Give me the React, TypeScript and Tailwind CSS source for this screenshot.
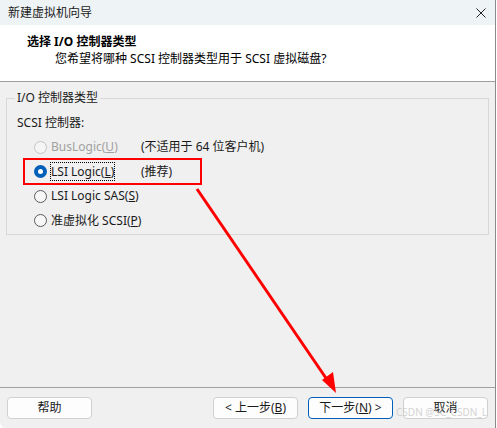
import React from 'react';

const FONT = { fontFamily: '"Noto Sans", "Noto Sans CJK SC", sans-serif' };

type Opt = { label: string; key: string; tail: string; note?: string; disabled?: boolean; checked?: boolean };

const OPTIONS: Opt[] = [
  { label: 'BusLogic(', key: 'U', tail: ')', note: '(不适用于 64 位客户机)', disabled: true },
  { label: 'LSI Logic(', key: 'L', tail: ')', note: '(推荐)', checked: true },
  { label: 'LSI Logic SAS(', key: 'S', tail: ')' },
  { label: '准虚拟化 SCSI(', key: 'P', tail: ')' },
];

function Radio({ checked, disabled }: { checked?: boolean; disabled?: boolean }) {
  if (checked) {
    return (
      <span className="flex h-[13px] w-[13px] items-center justify-center rounded-full bg-[#005fb8]">
        <span className="h-[5px] w-[5px] rounded-full bg-white" />
      </span>
    );
  }
  return (
    <span
      className={`h-[13px] w-[13px] rounded-full border ${
        disabled ? 'border-[#c4c4c4] bg-[#f5f5f5]' : 'border-[#5a5a5a] bg-[#f7f7f7]'
      }`}
    />
  );
}

function Button({ children, primary }: { children: React.ReactNode; primary?: boolean }) {
  return (
    <button
      type="button"
      className={`h-[22px] w-[85px] whitespace-nowrap rounded-[4px] border bg-[#fdfdfd] text-[12px] text-[#1a1a1a] ${
        primary ? 'border-[#005fb8]' : 'border-[#d0d0d0]'
      }`}
    >
      {children}
    </button>
  );
}

export default function App() {
  return (
    <div className="relative h-[428px] w-[497px] overflow-hidden bg-white" style={FONT}>
      <div className="flex h-[428px] w-[496px] flex-col rounded-bl-[6px] border-r border-[#8a8a8a] bg-[#f0f0f0]">
        {/* Title bar */}
        <div className="flex h-[25px] items-center justify-between bg-[#eef3f5] pl-[8px] pr-[9px] text-[12px] text-[#1a1a1a]">
          <span>新建虚拟机向导</span>
          <svg width="10" height="10" viewBox="0 0 10 10">
            <path d="M0.5 0.5 L9.5 9.5 M9.5 0.5 L0.5 9.5" stroke="#222" strokeWidth="1" />
          </svg>
        </div>

        {/* Header */}
        <div className="h-[57px] border-b border-[#a0a0a0] bg-white pl-[27px] pt-[8px] text-[12px] text-black">
          <div className="font-bold leading-[17px]">选择 I/O 控制器类型</div>
          <div className="pl-[28px] leading-[17px]">您希望将哪种 SCSI 控制器类型用于 SCSI 虚拟磁盘?</div>
        </div>

        {/* Content */}
        <div className="flex-1 px-[6px] pt-[8px]">
          <fieldset className="h-[145px] border border-[#d8d8d8] pl-[10px] text-[12px] text-[#1a1a1a]">
            <legend className="ml-[-2px] px-[2px] leading-[16px]">I/O 控制器类型</legend>
            <div className="mt-[9px] leading-[16px]">SCSI 控制器:</div>
            <div className="mt-[4px] flex flex-col">
              {OPTIONS.map((o) => (
                <div key={o.label} className="flex h-[24.5px] items-center whitespace-nowrap">
                  <span className="ml-[17px] flex w-[14px] shrink-0 justify-start">
                    <Radio checked={o.checked} disabled={o.disabled} />
                  </span>
                  <span className="w-[93px] shrink-0 pl-[3px]">
                    <span
                      className={`${o.disabled ? 'text-[#a0a0a0]' : ''} ${
                        o.checked ? 'outline-1 outline-dotted outline-black' : ''
                      }`}
                    >
                      {o.label}
                      <span className="underline">{o.key}</span>
                      {o.tail}
                    </span>
                  </span>
                  {o.note && <span>{o.note}</span>}
                </div>
              ))}
            </div>
          </fieldset>
        </div>

        {/* Footer */}
        <div className="flex h-[41px] items-start border-t border-[#a0a0a0] px-[7px] pt-[9px]">
          <Button>帮助</Button>
          <div className="ml-auto flex gap-[10px]">
            <Button>
              &lt; 上一步(<span className="underline">B</span>)
            </Button>
            <Button primary>
              下一步(<span className="underline">N</span>) &gt;
            </Button>
            <Button>取消</Button>
          </div>
        </div>
      </div>

      {/* Annotation overlay */}
      <div className="pointer-events-none absolute left-[23px] top-[158px] h-[27px] w-[179px] border-2 border-[#ff0000]" />
      <svg className="pointer-events-none absolute left-0 top-0" width="497" height="428">
        <line x1="197" y1="189" x2="330" y2="384" stroke="#ff0000" strokeWidth="3" />
        <polygon points="336,393 322,380 333,372" fill="#ff0000" />
      </svg>
      <div className="pointer-events-none absolute right-[10px] top-[406px] text-[10px] leading-[12px] text-[#c8c8c8]/80">
        CSDN @SC_CSDN_L
      </div>
    </div>
  );
}
